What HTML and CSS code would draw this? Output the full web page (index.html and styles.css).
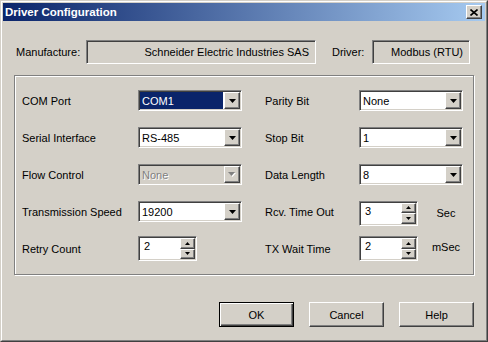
FILE: index.html
```html
<!DOCTYPE html>
<html lang="en">
<head>
    <meta charset="UTF-8">
    <title>Driver Configuration</title>
    <link rel="stylesheet" href="styles.css">
</head>
<body>
    <div class="window">
        <div class="window-inner">
            <div class="titlebar">
                <span class="title">Driver Configuration</span>
                <div class="close-btn">
                    <svg width="8" height="7" viewBox="0 0 8 7"><path d="M0.5 0.5 L7.5 6.5 M7.5 0.5 L0.5 6.5" stroke="#000" stroke-width="1.6" fill="none"/></svg>
                </div>
            </div>
            <div class="content">
                <div class="info-row">
                    <span class="info-label">Manufacture:</span>
                    <div class="readonly field-wide">Schneider Electric Industries SAS</div>
                    <span class="driver-label">Driver:</span>
                    <div class="readonly field-narrow">Modbus (RTU)</div>
                </div>

                <div class="group">
                    <div class="settings settings-left">
                        <span class="label">COM Port</span>
                        <div class="combo">
                            <span class="value selected">COM1</span>
                            <span class="drop"><svg width="7" height="4" viewBox="0 0 7 4"><polygon points="0,0 7,0 3.5,4" fill="#000"/></svg></span>
                        </div>

                        <span class="label">Serial Interface</span>
                        <div class="combo">
                            <span class="value">RS-485</span>
                            <span class="drop"><svg width="7" height="4" viewBox="0 0 7 4"><polygon points="0,0 7,0 3.5,4" fill="#000"/></svg></span>
                        </div>

                        <span class="label">Flow Control</span>
                        <div class="combo disabled">
                            <span class="value">None</span>
                            <span class="drop"><svg width="8" height="5" viewBox="0 0 8 5"><polygon points="1,1 8,1 4.5,5" fill="#fff"/><polygon points="0,0 7,0 3.5,4" fill="#808080"/></svg></span>
                        </div>

                        <span class="label">Transmission Speed</span>
                        <div class="combo">
                            <span class="value">19200</span>
                            <span class="drop"><svg width="7" height="4" viewBox="0 0 7 4"><polygon points="0,0 7,0 3.5,4" fill="#000"/></svg></span>
                        </div>

                        <span class="label">Retry Count</span>
                        <div class="spin-cell">
                            <div class="spin">
                                <span class="value">2</span>
                                <span class="spin-btns">
                                    <span class="spin-btn"><svg width="5" height="3" viewBox="0 0 5 3"><polygon points="0,3 5,3 2.5,0" fill="#000"/></svg></span>
                                    <span class="spin-btn"><svg width="5" height="3" viewBox="0 0 5 3"><polygon points="0,0 5,0 2.5,3" fill="#000"/></svg></span>
                                </span>
                            </div>
                        </div>
                    </div>

                    <div class="settings settings-right">
                        <span class="label">Parity Bit</span>
                        <div class="combo">
                            <span class="value">None</span>
                            <span class="drop"><svg width="7" height="4" viewBox="0 0 7 4"><polygon points="0,0 7,0 3.5,4" fill="#000"/></svg></span>
                        </div>

                        <span class="label">Stop Bit</span>
                        <div class="combo">
                            <span class="value">1</span>
                            <span class="drop"><svg width="7" height="4" viewBox="0 0 7 4"><polygon points="0,0 7,0 3.5,4" fill="#000"/></svg></span>
                        </div>

                        <span class="label">Data Length</span>
                        <div class="combo">
                            <span class="value">8</span>
                            <span class="drop"><svg width="7" height="4" viewBox="0 0 7 4"><polygon points="0,0 7,0 3.5,4" fill="#000"/></svg></span>
                        </div>

                        <span class="label">Rcv. Time Out</span>
                        <div class="spin-cell lowered">
                            <div class="spin">
                                <span class="value">3</span>
                                <span class="spin-btns">
                                    <span class="spin-btn"><svg width="5" height="3" viewBox="0 0 5 3"><polygon points="0,3 5,3 2.5,0" fill="#000"/></svg></span>
                                    <span class="spin-btn"><svg width="5" height="3" viewBox="0 0 5 3"><polygon points="0,0 5,0 2.5,3" fill="#000"/></svg></span>
                                </span>
                            </div>
                            <span class="unit">Sec</span>
                        </div>

                        <span class="label">TX Wait Time</span>
                        <div class="spin-cell">
                            <div class="spin">
                                <span class="value">2</span>
                                <span class="spin-btns">
                                    <span class="spin-btn"><svg width="5" height="3" viewBox="0 0 5 3"><polygon points="0,3 5,3 2.5,0" fill="#000"/></svg></span>
                                    <span class="spin-btn"><svg width="5" height="3" viewBox="0 0 5 3"><polygon points="0,0 5,0 2.5,3" fill="#000"/></svg></span>
                                </span>
                            </div>
                            <span class="unit unit-up">mSec</span>
                        </div>
                    </div>
                </div>

                <div class="buttons">
                    <button class="btn default">OK</button>
                    <button class="btn">Cancel</button>
                    <button class="btn">Help</button>
                </div>
            </div>
        </div>
    </div>
</body>
</html>
```

FILE: styles.css
```css
html, body {
  margin: 0;
}

body {
  width: 488px;
  height: 342px;
  background-color: #d4d0c8;
  font-family: "Liberation Sans", Arial, sans-serif;
  font-size: 11px;
  color: #000;
}

.window {
  box-sizing: border-box;
  width: 488px;
  height: 342px;
  border: 1px solid;
  border-color: #d4d0c8 #404040 #404040 #d4d0c8;
  background-color: #d4d0c8;
}

.window-inner {
  box-sizing: border-box;
  height: 100%;
  border: 1px solid;
  border-color: #fff #808080 #808080 #fff;
  padding: 1px;
}

.titlebar {
  height: 18px;
  display: flex;
  align-items: center;
  justify-content: space-between;
  padding: 0 3px 0 2px;
  background: linear-gradient(to right, #0a246a, #a6caf0);
  color: #fff;
}

.title {
  font-weight: bold;
  font-size: 11.5px;
}

.close-btn {
  box-sizing: border-box;
  width: 16px;
  height: 14px;
  display: flex;
  align-items: center;
  justify-content: center;
  background-color: #d4d0c8;
  border: 1px solid;
  border-color: #fff #404040 #404040 #fff;
  box-shadow: inset -1px -1px 0 #808080;
}

.content {
  padding: 19px 11px 0 11px;
}

.info-row {
  display: flex;
  align-items: center;
  height: 24px;
  padding-left: 2px;
}

.info-label {
  width: 70px;
}

.driver-label {
  width: 40px;
  margin-left: 16px;
}

.readonly {
  box-sizing: border-box;
  height: 24px;
  display: flex;
  align-items: center;
  justify-content: flex-end;
  padding-right: 6px;
  border: 1px solid;
  border-color: #808080 #fff #fff #808080;
  box-shadow: inset 1px 1px 0 #404040, inset -1px -1px 0 #d4d0c8;
  background-color: #d4d0c8;
}

.field-wide {
  width: 230px;
}

.field-narrow {
  width: 98px;
}

.group {
  box-sizing: border-box;
  width: 460px;
  height: 200px;
  margin-top: 11px;
  padding: 6px 0 0 7px;
  display: flex;
  gap: 23px;
  border: 1px solid #808080;
  box-shadow: inset 1px 1px 0 #fff, 1px 1px 0 #fff;
}

.settings {
  display: grid;
  grid-auto-rows: 37px;
  align-items: center;
}

.settings-left {
  grid-template-columns: 116px 104px;
}

.settings-right {
  grid-template-columns: 94px 104px;
}

.label {
  padding-top: 1px;
}

.combo {
  box-sizing: border-box;
  width: 104px;
  height: 21px;
  display: flex;
  padding: 1px;
  border: 1px solid;
  border-color: #808080 #fff #fff #808080;
  box-shadow: inset 1px 1px 0 #404040, inset -1px -1px 0 #d4d0c8;
  background-color: #fff;
}

.combo .value {
  flex: 1;
  display: flex;
  align-items: center;
  padding-left: 2px;
  margin-right: 1px;
}

.combo .value.selected {
  background-color: #0a246a;
  color: #fff;
}

.drop {
  box-sizing: border-box;
  width: 16px;
  display: flex;
  align-items: center;
  justify-content: center;
  background-color: #d4d0c8;
  border: 1px solid;
  border-color: #fff #404040 #404040 #fff;
  box-shadow: inset -1px -1px 0 #808080;
}

.combo.disabled {
  background-color: #d4d0c8;
}

.combo.disabled .value {
  color: #808080;
  text-shadow: 1px 1px 0 #fff;
}

.spin-cell {
  display: flex;
  align-items: center;
}

.spin-cell.lowered {
  padding-top: 3px;
}

.spin {
  box-sizing: border-box;
  flex-shrink: 0;
  width: 59px;
  height: 25px;
  display: flex;
  padding: 1px;
  border: 1px solid;
  border-color: #808080 #fff #fff #808080;
  box-shadow: inset 1px 1px 0 #404040, inset -1px -1px 0 #d4d0c8;
  background-color: #fff;
}

.spin .value {
  flex: 1;
  padding: 2px 0 0 4px;
}

.spin-btns {
  width: 15px;
  display: flex;
  flex-direction: column;
}

.spin-btn {
  box-sizing: border-box;
  flex: 1;
  display: flex;
  align-items: center;
  justify-content: center;
  background-color: #d4d0c8;
  border: 1px solid;
  border-color: #fff #404040 #404040 #fff;
  box-shadow: inset -1px -1px 0 #808080;
}

.unit {
  flex-shrink: 0;
  width: 56px;
  text-align: center;
}

.unit-up {
  margin-top: -4px;
}

.buttons {
  display: flex;
  justify-content: flex-end;
  gap: 15px;
  margin-top: 27px;
}

.btn {
  box-sizing: border-box;
  width: 75px;
  height: 25px;
  padding: 0;
  font-family: "Liberation Sans", Arial, sans-serif;
  font-size: 11px;
  color: #000;
  background-color: #d4d0c8;
  border: 1px solid;
  border-color: #fff #404040 #404040 #fff;
  box-shadow: inset -1px -1px 0 #808080;
}

.btn.default {
  border: 1px solid #000;
  box-shadow: inset 1px 1px 0 #fff, inset -1px -1px 0 #404040, inset -2px -2px 0 #808080;
}
```
